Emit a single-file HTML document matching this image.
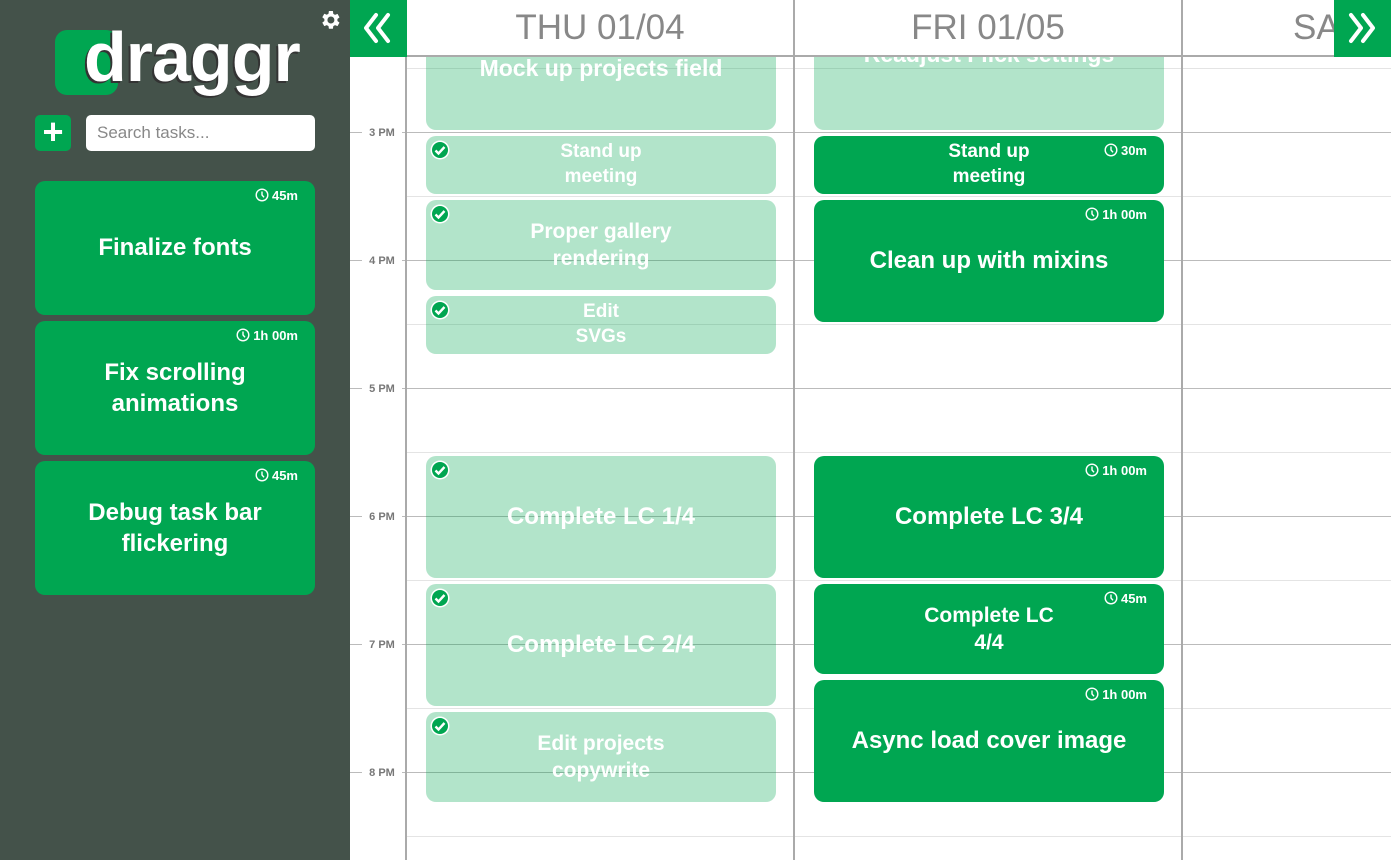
<!DOCTYPE html>
<html><head><style>
*{margin:0;padding:0;box-sizing:border-box}
body{width:1391px;height:860px;overflow:hidden;background:#fff;font-family:"Liberation Sans",sans-serif;position:relative}
.side{position:absolute;left:0;top:0;width:350px;height:860px;background:#44524a}
.card{position:absolute;background:#00a651;border-radius:10px;color:#fff;font-weight:bold;display:flex;align-items:center;justify-content:center;text-align:center;line-height:1.3}
.light{background:rgba(0,166,81,0.3)}
.dur{position:absolute;right:17px;top:7px;font-size:13px;font-weight:bold;display:flex;align-items:center;gap:3px;line-height:1}
.chk{position:absolute;left:4px;top:4px;width:20px;height:20px}
.hl{position:absolute;left:350px;right:0;height:1px;background:#bbb}
.hh{position:absolute;left:406px;right:0;height:1px;background:#e4e4e4}
.tl{position:absolute;left:362px;width:40px;text-align:center;font-size:11px;font-weight:bold;color:#777;background:#fff}
.vl{position:absolute;top:0;width:2px;height:860px;background:#aaa}
.hd{position:absolute;top:0;height:56px;font-size:35px;color:#888;display:flex;align-items:center;justify-content:center;background:#fff}
</style></head><body>
<svg width="0" height="0" style="position:absolute"><defs>
<symbol id="clk" viewBox="0 0 14 14"><circle cx="7" cy="7" r="5.8" fill="none" stroke="#fff" stroke-width="1.4"/><path d="M7 3.5V7l2 2.3" fill="none" stroke="#fff" stroke-width="1.4"/></symbol>
<symbol id="ck" viewBox="0 0 20 20"><circle cx="10" cy="10" r="9.5" fill="#fff"/><circle cx="10" cy="10" r="8" fill="#00a651"/><path d="M5.5 10.5l3 3 6-6.5" fill="none" stroke="#fff" stroke-width="2.4"/></symbol>
</defs></svg>

<div class="side">
  <svg style="position:absolute;left:318px;top:8px" width="24" height="24" viewBox="0 0 24 24"><path fill="#fff" d="M19.4 13a7.5 7.5 0 000-2l2.1-1.6-2-3.5-2.5 1a7.6 7.6 0 00-1.7-1L14.9 3h-4l-.4 2.7a7.6 7.6 0 00-1.7 1l-2.5-1-2 3.5L6.4 11a7.5 7.5 0 000 2l-2.1 1.6 2 3.5 2.5-1a7.6 7.6 0 001.7 1l.4 2.7h4l.4-2.7a7.6 7.6 0 001.7-1l2.5 1 2-3.5zM12.9 15.5a3.5 3.5 0 110-7 3.5 3.5 0 010 7z"/></svg>
  <div style="position:absolute;left:55px;top:30px;width:63px;height:65px;background:#00a651;border-radius:12px"></div>
  <div style="position:absolute;left:84px;top:22px;font-size:70px;font-weight:bold;color:#fff;letter-spacing:-1px;text-shadow:-2px 2px 0 #333;line-height:1">draggr</div>
  <div style="position:absolute;left:35px;top:115px;width:36px;height:36px;background:#00a651;border-radius:5px;color:#fff;font-size:36px;font-weight:bold;line-height:34px;text-align:center">+</div>
  <div style="position:absolute;left:86px;top:115px;width:229px;height:36px;background:#fff;border-radius:5px;color:#888;font-size:17px;line-height:36px;padding-left:11px">Search tasks...</div>
  <div class="card" style="left:35px;top:181px;width:280px;height:134px;font-size:24px"><div class="dur"><svg width="14" height="14"><use href="#clk"/></svg>45m</div>Finalize fonts</div>
  <div class="card" style="left:35px;top:321px;width:280px;height:134px;font-size:24px"><div class="dur"><svg width="14" height="14"><use href="#clk"/></svg>1h 00m</div>Fix scrolling<br>animations</div>
  <div class="card" style="left:35px;top:461px;width:280px;height:134px;font-size:24px"><div class="dur"><svg width="14" height="14"><use href="#clk"/></svg>45m</div>Debug task bar<br>flickering</div>
</div>

<div class="hh" style="top:68px"></div><div class="hh" style="top:196px"></div><div class="hh" style="top:324px"></div><div class="hh" style="top:452px"></div><div class="hh" style="top:580px"></div><div class="hh" style="top:708px"></div><div class="hh" style="top:836px"></div>
<div class="hl" style="top:132px"></div><div class="hl" style="top:260px"></div><div class="hl" style="top:388px"></div><div class="hl" style="top:516px"></div><div class="hl" style="top:644px"></div><div class="hl" style="top:772px"></div>
<div class="tl" style="top:127px">3 PM</div><div class="tl" style="top:255px">4 PM</div><div class="tl" style="top:383px">5 PM</div><div class="tl" style="top:511px">6 PM</div><div class="tl" style="top:639px">7 PM</div><div class="tl" style="top:767px">8 PM</div>
<div class="vl" style="left:405px"></div><div class="vl" style="left:793px"></div><div class="vl" style="left:1181px"></div>

<!-- Thu -->
<div class="card light" style="left:426px;top:20px;width:350px;height:110px;font-size:23px;align-items:flex-start;padding-top:34px">Mock up projects field</div>
<div class="card light" style="left:426px;top:136px;width:350px;height:58px;font-size:19px"><svg class="chk"><use href="#ck"/></svg>Stand up<br>meeting</div>
<div class="card light" style="left:426px;top:200px;width:350px;height:90px;font-size:21px"><svg class="chk"><use href="#ck"/></svg>Proper gallery<br>rendering</div>
<div class="card light" style="left:426px;top:296px;width:350px;height:58px;font-size:19px"><svg class="chk"><use href="#ck"/></svg>Edit<br>SVGs</div>
<div class="card light" style="left:426px;top:456px;width:350px;height:122px;font-size:24px"><svg class="chk"><use href="#ck"/></svg>Complete LC 1/4</div>
<div class="card light" style="left:426px;top:584px;width:350px;height:122px;font-size:24px"><svg class="chk"><use href="#ck"/></svg>Complete LC 2/4</div>
<div class="card light" style="left:426px;top:712px;width:350px;height:90px;font-size:21px"><svg class="chk"><use href="#ck"/></svg>Edit projects<br>copywrite</div>

<!-- Fri -->
<div class="card light" style="left:814px;top:20px;width:350px;height:110px;font-size:23px;align-items:flex-start;padding-top:20px">Readjust Flick settings</div>
<div class="card" style="left:814px;top:136px;width:350px;height:58px;font-size:19px"><div class="dur"><svg width="14" height="14"><use href="#clk"/></svg>30m</div>Stand up<br>meeting</div>
<div class="card" style="left:814px;top:200px;width:350px;height:122px;font-size:24px"><div class="dur"><svg width="14" height="14"><use href="#clk"/></svg>1h 00m</div>Clean up with mixins</div>
<div class="card" style="left:814px;top:456px;width:350px;height:122px;font-size:24px"><div class="dur"><svg width="14" height="14"><use href="#clk"/></svg>1h 00m</div>Complete LC 3/4</div>
<div class="card" style="left:814px;top:584px;width:350px;height:90px;font-size:21px"><div class="dur"><svg width="14" height="14"><use href="#clk"/></svg>45m</div>Complete LC<br>4/4</div>
<div class="card" style="left:814px;top:680px;width:350px;height:122px;font-size:24px"><div class="dur"><svg width="14" height="14"><use href="#clk"/></svg>1h 00m</div>Async load cover image</div>

<!-- header -->
<div style="position:absolute;left:350px;top:0;width:1041px;height:56px;background:#fff"></div>
<div class="hd" style="left:407px;width:386px">THU 01/04</div>
<div class="hd" style="left:795px;width:386px">FRI 01/05</div>
<div class="hd" style="left:1183px;width:208px;justify-content:flex-start;padding-left:110px">SAT</div>
<div style="position:absolute;left:350px;top:55px;width:1041px;height:2px;background:#aaa"></div>
<div class="vl" style="left:405px;height:56px"></div><div class="vl" style="left:793px;height:56px"></div><div class="vl" style="left:1181px;height:56px"></div>
<div style="position:absolute;left:350px;top:0;width:57px;height:57px;background:#00a651"><svg width="57" height="57" viewBox="0 0 57 57"><path d="M26 15L16 28l10 13M38 15L28 28l10 13" fill="none" stroke="#fff" stroke-width="4" stroke-linecap="round" stroke-linejoin="round"/></svg></div>
<div style="position:absolute;left:1334px;top:0;width:57px;height:57px;background:#00a651"><svg width="57" height="57" viewBox="0 0 57 57"><path d="M17 15l10 13-10 13M29 15l10 13-10 13" fill="none" stroke="#fff" stroke-width="4" stroke-linecap="round" stroke-linejoin="round"/></svg></div>
</body></html>
